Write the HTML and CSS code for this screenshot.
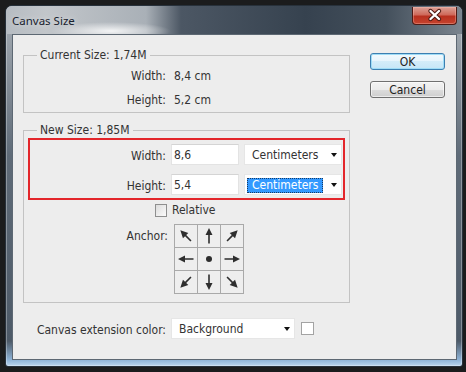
FILE: index.html
```html
<!DOCTYPE html>
<html lang="en">
<head>
    <meta charset="UTF-8">
    <title>Canvas Size</title>
    <link rel="stylesheet" href="styles.css">
</head>
<body>
    <div class="window">
        <div class="titlebar">
            <span class="title">Canvas Size</span>
            <div class="close">
                <svg width="45" height="18" viewBox="0 0 45 18">
                    <path d="M18.5 5 L27 13 M27 5 L18.5 13" stroke="#4a1812" stroke-width="4.4" stroke-linecap="round"/>
                    <path d="M18.5 5 L27 13 M27 5 L18.5 13" stroke="#fff" stroke-width="2.4" stroke-linecap="round"/>
                </svg>
            </div>
        </div>

        <div class="client">
            <div class="main">
                <fieldset class="group current">
                    <legend>Current Size: 1,74M</legend>
                    <div class="info-row"><span class="label">Width:</span><span class="value">8,4 cm</span></div>
                    <div class="info-row"><span class="label">Height:</span><span class="value">5,2 cm</span></div>
                </fieldset>

                <fieldset class="group new-size">
                    <legend>New Size: 1,85M</legend>
                    <div class="marked">
                        <div class="field-row">
                            <span class="label">Width:</span>
                            <div class="input">8,6</div>
                            <div class="select">Centimeters<span class="caret"></span></div>
                        </div>
                        <div class="field-row">
                            <span class="label">Height:</span>
                            <div class="input">5,4</div>
                            <div class="select focused"><span class="selected">Centimeters</span><span class="caret"></span></div>
                        </div>
                    </div>

                    <div class="check-row"><span class="checkbox"></span>Relative</div>

                    <div class="anchor-row">
                        <span class="label">Anchor:</span>
                        <div class="anchor-grid">
                            <div class="cell"><svg viewBox="0 0 22 22"><g transform="rotate(-45 11 11)"><path d="M11 3 L14.8 10.5 L11.8 10.5 L11.8 18 L10.2 18 L10.2 10.5 L7.2 10.5 Z"/></g></svg></div>
                            <div class="cell"><svg viewBox="0 0 22 22"><path d="M11 3 L14.5 10 L11.8 10 L11.8 18.5 L10.2 18.5 L10.2 10 L7.5 10 Z"/></svg></div>
                            <div class="cell"><svg viewBox="0 0 22 22"><g transform="rotate(45 11 11)"><path d="M11 3 L14.8 10.5 L11.8 10.5 L11.8 18 L10.2 18 L10.2 10.5 L7.2 10.5 Z"/></g></svg></div>
                            <div class="cell"><svg viewBox="0 0 22 22"><g transform="rotate(-90 11 11)"><path d="M11 3 L14.5 10 L11.8 10 L11.8 18.5 L10.2 18.5 L10.2 10 L7.5 10 Z"/></g></svg></div>
                            <div class="cell"><svg viewBox="0 0 22 22"><circle cx="11" cy="11" r="3"/></svg></div>
                            <div class="cell"><svg viewBox="0 0 22 22"><g transform="rotate(90 11 11)"><path d="M11 3 L14.5 10 L11.8 10 L11.8 18.5 L10.2 18.5 L10.2 10 L7.5 10 Z"/></g></svg></div>
                            <div class="cell"><svg viewBox="0 0 22 22"><g transform="rotate(-135 11 11)"><path d="M11 3 L14.8 10.5 L11.8 10.5 L11.8 18 L10.2 18 L10.2 10.5 L7.2 10.5 Z"/></g></svg></div>
                            <div class="cell"><svg viewBox="0 0 22 22"><g transform="rotate(180 11 11)"><path d="M11 3 L14.5 10 L11.8 10 L11.8 18.5 L10.2 18.5 L10.2 10 L7.5 10 Z"/></g></svg></div>
                            <div class="cell"><svg viewBox="0 0 22 22"><g transform="rotate(135 11 11)"><path d="M11 3 L14.8 10.5 L11.8 10.5 L11.8 18 L10.2 18 L10.2 10.5 L7.2 10.5 Z"/></g></svg></div>
                        </div>
                    </div>
                </fieldset>

                <div class="ext-row">
                    <span class="label">Canvas extension color:</span>
                    <div class="select wide">Background<span class="caret"></span></div>
                    <span class="swatch"></span>
                </div>
            </div>

            <div class="buttons">
                <button class="btn default">OK</button>
                <button class="btn">Cancel</button>
            </div>
        </div>
    </div>
</body>
</html>
```

FILE: styles.css
```css
body {
    margin: 0;
    width: 466px;
    height: 372px;
    overflow: hidden;
    background-color: #1b1c1d;
    font-family: "DejaVu Sans Condensed", "DejaVu Sans", sans-serif;
    font-size: 12px;
    color: #333;
}
.window {
    box-sizing: border-box;
    width: 458px;
    height: 362px;
    margin: 5px 0 0 5px;
    border: 1px solid #27313b;
    border-radius: 7px 7px 3px 3px;
    display: flex;
    flex-direction: column;
    background: linear-gradient(to bottom, #a9b0b7 0, #5f6b78 150px, #4d5a68 335px, #8fb4d8 354px, #c8e0f6 362px);
    box-shadow: inset 0 0 0 1px rgba(255,255,255,0.3);
}
.titlebar {
    height: 28px;
    flex: none;
    display: flex;
    align-items: center;
    padding-left: 6px;
    border-radius: 6px 6px 0 0;
    background:
        radial-gradient(ellipse 60px 9px at 105px 25px, rgba(255,255,255,0.85), rgba(255,255,255,0)),
        linear-gradient(90deg, #b6bcc2 0, #c2c6ca 40px, #a9b0b7 140px, #4c5764 175px, #36424f 300px, #44505c 380px, #7b858f 100%);
}
.title {
    font-family: "Noto Sans", sans-serif;
    font-size: 11.5px;
    color: #18222e;
    text-shadow: 0 0 6px rgba(255,255,255,0.6);
}
.close {
    margin-left: auto;
    margin-right: 5px;
    align-self: flex-start;
    margin-top: 1px;
    width: 45px;
    height: 18px;
    box-sizing: border-box;
    border: 1px solid #4f1a14;
    border-top: none;
    border-radius: 0 0 4px 4px;
    background: linear-gradient(to bottom, #dca196 0, #cf6a5b 45%, #b8301f 55%, #c6432e 100%);
    box-shadow: inset 0 0 0 1px rgba(255,200,190,0.35);
}
.close svg {
    display: block;
    margin-top: -1px;
    margin-left: -1px;
}
.client {
    flex: 1;
    margin: 0 5px 6px 6px;
    border: 1px solid #5d6873;
    background-color: #ededed;
    display: flex;
    gap: 20px;
    padding: 13px 11px 0 10px;
}
.main {
    width: 327px;
}
.group {
    margin: 0;
    padding: 0 0 1px;
    border: 1px solid #c3c3c3;
    min-width: 0;
}
.group legend {
    margin-left: 13px;
    padding: 0 3px;
    line-height: 14px;
}
.current {
    padding: 2px 0 0;
}
.new-size {
    margin-top: 10px;
    padding-bottom: 8px;
}
.info-row {
    display: flex;
    align-items: center;
    height: 24px;
}
.info-row .label {
    width: 142px;
    text-align: right;
}
.value {
    margin-left: 8px;
}
.marked {
    margin: 1px 4px 0;
    border: 2px solid #e3262b;
    padding: 4px 0 3px;
    display: flex;
    flex-direction: column;
    gap: 9px;
}
.field-row {
    display: flex;
    align-items: center;
    gap: 5px;
    height: 21px;
}
.field-row .label {
    width: 136px;
    text-align: right;
    padding-top: 2px;
}
.input {
    box-sizing: border-box;
    width: 68px;
    height: 21px;
    background-color: #fff;
    border: 1px solid #e3e3e3;
    border-top-color: #d4d4d4;
    padding: 1px 0 0 2px;
    line-height: 19px;
}
.select {
    box-sizing: border-box;
    width: 98px;
    height: 21px;
    background-color: #fff;
    border: 1px solid #e6e6e6;
    display: flex;
    align-items: center;
    padding: 1px 0 0 7px;
}
.select.focused {
    padding-left: 2px;
}
.selected {
    background-color: #3399ff;
    color: #fff;
    border: 1px dotted #173a63;
    padding: 0 4px;
    line-height: 13px;
}
.caret {
    margin-left: auto;
    margin-right: 4px;
    width: 0;
    height: 0;
    border-top: 4px solid #111;
    border-left: 3.5px solid transparent;
    border-right: 3.5px solid transparent;
}
.select.wide {
    width: 124px;
}
.check-row {
    display: flex;
    align-items: center;
    height: 16px;
    margin-top: 2px;
    padding-left: 131px;
}
.checkbox {
    box-sizing: border-box;
    width: 12px;
    height: 13px;
    border: 1px solid #8e8f8f;
    background: linear-gradient(to bottom right, #dcdcdc, #fbfbfb);
    margin-right: 5px;
}
.anchor-row {
    display: flex;
    margin-top: 6px;
}
.anchor-row .label {
    width: 144px;
    margin-right: 6px;
    text-align: right;
    padding-top: 5px;
    line-height: 14px;
}
.anchor-grid {
    display: grid;
    grid-template-columns: repeat(3, 22px);
    grid-template-rows: repeat(3, 22px);
    gap: 1px;
    border: 1px solid #a9a9a9;
    background-color: #a9a9a9;
}
.cell {
    background-color: #eeeeee;
}
.cell svg {
    display: block;
    width: 22px;
    height: 22px;
    fill: #2e2e2e;
}
.ext-row {
    display: flex;
    align-items: center;
    margin-top: 15px;
    height: 21px;
}
.ext-row .label {
    width: 143px;
    margin-right: 5px;
    text-align: right;
    padding-top: 2px;
}
.swatch {
    box-sizing: border-box;
    width: 13px;
    height: 13px;
    margin-left: 6px;
    border: 1px solid #a3a3a3;
    background-color: #fff;
}
.buttons {
    display: flex;
    flex-direction: column;
    gap: 11px;
    margin-top: 5px;
}
.btn {
    box-sizing: border-box;
    width: 75px;
    height: 17px;
    padding: 0;
    border: 1px solid #707070;
    border-radius: 3px;
    background: linear-gradient(to bottom, #f3f3f3 0, #ebebeb 50%, #dddddd 50%, #cfcfcf 100%);
    font-family: "DejaVu Sans Condensed", "DejaVu Sans", sans-serif;
    font-size: 12px;
    line-height: 14px;
    color: #222;
    box-shadow: inset 0 0 0 1px rgba(255,255,255,0.6);
}
.btn.default {
    border-color: #3c7fb1;
    background: linear-gradient(to bottom, #f2f9fd 0, #e6f4fc 50%, #d3ecf9 50%, #c6e6f7 100%);
    box-shadow: inset 0 0 0 1px #9fdcf6;
}
```
